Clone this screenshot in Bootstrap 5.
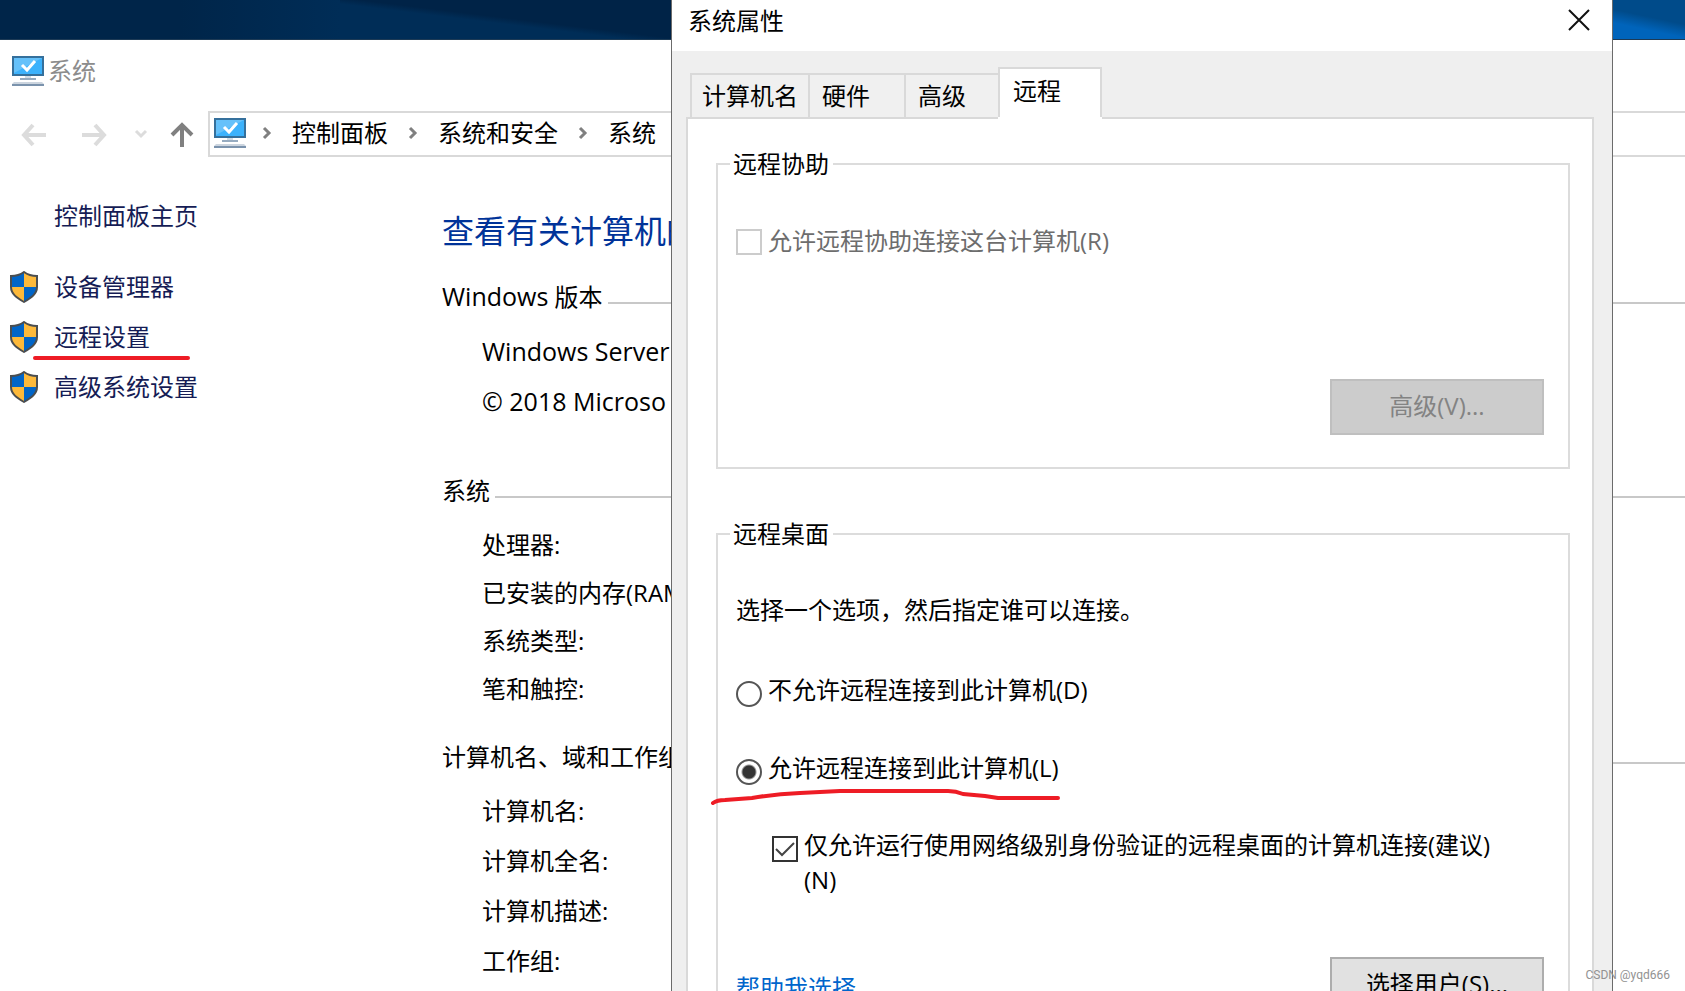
<!DOCTYPE html>
<html lang="zh-CN">
<head>
<meta charset="utf-8">
<meta name="viewport" content="width=device-width, initial-scale=1">
<title>系统属性</title>
<link href="https://cdn.jsdelivr.net/npm/bootstrap@5.3.0/dist/css/bootstrap.min.css" rel="stylesheet">
<style>
  body { font-family: "Open Sans", "Noto Sans CJK SC", sans-serif; font-size: 24px; line-height: 24px; color: #000; }
  a { text-decoration: none; }
  .desktop { padding-top: 39px; background: linear-gradient(192deg, #004b8a 0 45%, #0064bb 70%) top right / 72px 39px no-repeat, linear-gradient(187deg, #002347 0 48%, #002d57 56%) top left 340px / 332px 39px no-repeat, linear-gradient(90deg, #002549 0, #002549 180px, #002d57 340px); }
  .sys-window { border-top: 1px solid #1d3a55; background: #fff; }
  .sys-title { padding: 16px 12px 0; gap: 4px; color: #8c8c8c; }
  .nav-row { margin-top: 25px; padding-left: 20px; }
  .nav-row > button { border: 0; padding: 0; background: none; display: flex; }
  .nav-row .forward { margin-left: 32px; }
  .nav-row .up { margin-left: 19px; }
  .address { margin-left: 11px; border: 2px solid #d9d9d9; border-right: 0; height: 46px; padding: 0 4px 3px; }
  .address a { color: #000; }
  .crumbs { gap: 20px; margin-left: 16px; }
  .side { width: 442px; padding: 47px 10px 0; }
  .side a { color: #151c55; }
  .side-home { margin-left: 44px; margin-bottom: 43px; }
  .side-task { gap: 16px; height: 32px; margin-bottom: 18px; }
  .info { padding-top: 58px; }
  .info h1 { font-size: 32px; line-height: 32px; font-weight: 400; color: #003399; margin: 0 0 37px; }
  .info h2 { font-size: 24px; line-height: 24px; font-weight: 400; margin: 0 0 30px; gap: 5px; }
  .info h2::after { content: ""; flex: 1; height: 2px; margin-bottom: 5px; background: #c8c8c8; }
  .latin { font-size: 25px; }
  .facts { padding-left: 40px; margin: 0; gap: 26px; }
  .facts-tight { gap: 24px; }
  .edition { margin-bottom: 66px; }
  .hardware { margin-bottom: 44px; }
  .dialog-window { left: 671px; right: 72px; border: solid #6b6b6b; border-width: 0 1px; background: #efefef; }
  .dialog-title { height: 51px; padding: 0 22px 9px 16px; background: #fff; }
  .dialog-title button { border: 0; padding: 0; background: none; display: flex; margin-bottom: 3px; }
  .prop-tabs { padding: 18px 18px 0; height: 66px; }
  .prop-tabs button { border: 2px solid #d9d9d9; border-bottom: 0; background: #f0f0f0; height: 44px; padding: 0 10px; color: #000; text-align: left; }
  .prop-tabs button + button { border-left: 0; padding-left: 12px; width: 96px; }
  .prop-tabs button:nth-child(3) { width: 92px; border-right: 0; }
  .prop-tabs button.active { height: 50px; width: 104px; border-left: 2px solid #d9d9d9; background: #fff; padding-left: 13px; padding-bottom: 5px; }
  .sheet { margin: 0 18px 0 14px; border: 2px solid #d9d9d9; border-bottom: 0; background: #fff; padding: 33px 22px 0 28px; gap: 53px; }
  .prop-tabs button.active { position: relative; z-index: 1; box-shadow: 0 2px #fff; clip-path: inset(0 0 -2px 0); }
  .group { border: 2px solid #dcdcdc; padding: 0 24px 32px 18px; }
  .group legend { float: none; width: auto; font-size: 24px; line-height: 24px; margin: 0 0 0 -6px; padding: 0 4px 0 3px; }
  .option { display: flex; gap: 6px; }
  .option input { appearance: none; flex: none; width: 26px; height: 26px; margin: 0; border: 2px solid #333; background: #fff; }
  .option input[type=radio] { border-radius: 50%; margin-top: 3px; border-color: #555; }
  .option input[type=radio]:checked { background: radial-gradient(circle, #333 0 6px, #fff 8px); }
  .option input:disabled { border-color: #ccc; }
  .option input:disabled + label { color: #6d6d6d; opacity: 1; }
  .option .tick { background: url("data:image/svg+xml,%3Csvg xmlns='http://www.w3.org/2000/svg' viewBox='0 0 22 22'%3E%3Cpath d='M2 11l6 6L20 5' fill='none' stroke='%23444' stroke-width='2'/%3E%3C/svg%3E") center / 22px no-repeat; }
  .assist { margin-top: 53px; margin-bottom: 124px; }
  .deny { margin-top: 56px; margin-bottom: 49px; }
  .nla { margin: 51px 0 60px 36px; }
  .nla label { line-height: 35px; margin-top: -9px; }
  .hint { margin: 52px 0 0; }
  .push { width: 214px; height: 56px; border: 2px solid #adadad; background: #e1e1e1; color: #000; padding: 0 0 2px; }
  .push:disabled { border-color: #bfbfbf; background: #ccc; color: #838383; }
  .help { color: #0066cc; margin-top: 19px; }
  .pen { left: 0; top: 0; pointer-events: none; z-index: 3; }
  .watermark { right: 15px; bottom: 8px; font-size: 12px; line-height: 16px; color: #929292; z-index: 4; font-family: "Roboto", sans-serif; }
</style>
</head>
<body>
<svg class="d-none">
  <symbol id="pc" viewBox="0 0 32 30">
    <rect x="1" y="1" width="30" height="18" fill="#3cb2fc" stroke="#35709c" stroke-width="2"/>
    <path d="M2 2h28L2 17z" fill="#65c1fa"/>
    <path d="M10 9l5 5 8-9" fill="none" stroke="#fff" stroke-width="3"/>
    <path d="M8 22h16v2H8z" fill="#96abc0"/><path d="M13 20h6v2h-6z" fill="#d2dce5"/>
    <path d="M2 26h28l2 2H0z" fill="#ccd5df"/><path d="M0 28h32v2H0z" fill="#7b93ad"/>
  </symbol>
  <symbol id="shield" viewBox="0 0 28 32">
    <path d="M14 1C10 4 5 5 1 5v11c0 7 6 11 13 15 7-4 13-8 13-15V5c-4 0-9-1-13-4z" fill="#fdb93a"/>
    <path d="M14 1C10 4 5 5 1 5v11h13zM14 16h13c0 7-6 11-13 15z" fill="#0165c8"/>
    <path d="M14 1C10 4 5 5 1 5v11c0 7 6 11 13 15 7-4 13-8 13-15V5c-4 0-9-1-13-4z" fill="none" stroke="#4b4e50" stroke-width="2"/>
  </symbol>
  <symbol id="sep" viewBox="0 0 10 14"><path d="M2 2l5 5-5 5" fill="none" stroke="#808080" stroke-width="3"/></symbol>
</svg>

<div class="desktop position-relative vh-100 overflow-hidden">
  <main class="sys-window h-100">
    <div class="sys-title d-flex align-items-center">
      <svg width="32" height="30"><use href="#pc"/></svg><span>系统</span>
    </div>
    <div class="nav-row d-flex align-items-center">
      <button aria-label="后退"><svg width="28" height="26"><path d="M26 14H4M13 4L4 14l9 10" fill="none" stroke="#dcdcdc" stroke-width="4"/></svg></button>
      <button aria-label="前进" class="forward"><svg width="28" height="26"><path d="M2 14h22M15 4l9 10-9 10" fill="none" stroke="#dcdcdc" stroke-width="4"/></svg></button>
      <button aria-label="最近" class="ms-4"><svg width="18" height="14"><path d="M4 4l5 5 5-5" fill="none" stroke="#dcdcdc" stroke-width="3"/></svg></button>
      <button aria-label="向上" class="up"><svg width="28" height="28"><path d="M13 27V5M3 15L13 5l10 10" fill="none" stroke="#808080" stroke-width="4"/></svg></button>
      <nav class="address d-flex align-items-center flex-grow-1" aria-label="路径">
        <svg width="32" height="30"><use href="#pc"/></svg>
        <div class="crumbs d-flex align-items-center">
          <svg width="10" height="14"><use href="#sep"/></svg><a href="#">控制面板</a>
          <svg width="10" height="14"><use href="#sep"/></svg><a href="#">系统和安全</a>
          <svg width="10" height="14"><use href="#sep"/></svg><a href="#">系统</a>
        </div>
      </nav>
    </div>
    <div class="d-flex">
      <aside class="side flex-shrink-0">
        <div class="side-home"><a href="#">控制面板主页</a></div>
        <div class="side-task d-flex align-items-center"><svg width="28" height="32"><use href="#shield"/></svg><a href="#">设备管理器</a></div>
        <div class="side-task d-flex align-items-center"><svg width="28" height="32"><use href="#shield"/></svg><a href="#">远程设置</a></div>
        <div class="side-task d-flex align-items-center"><svg width="28" height="32"><use href="#shield"/></svg><a href="#">高级系统设置</a></div>
      </aside>
      <section class="info flex-grow-1">
        <h1>查看有关计算机的</h1>
        <h2 class="d-flex align-items-end"><span><span class="latin">Windows</span> 版本</span></h2>
        <div class="facts edition latin d-flex flex-column"><div>Windows Server</div><div>© 2018 Microso</div></div>
        <h2 class="d-flex align-items-end">系统</h2>
        <div class="facts facts-tight hardware d-flex flex-column"><div>处理器:</div><div>已安装的内存(RAM</div><div>系统类型:</div><div>笔和触控:</div></div>
        <h2 class="d-flex align-items-end">计算机名、域和工作组</h2>
        <div class="facts d-flex flex-column"><div>计算机名:</div><div>计算机全名:</div><div>计算机描述:</div><div>工作组:</div></div>
      </section>
    </div>
  </main>

  <div class="dialog-window position-absolute top-0 bottom-0 d-flex flex-column overflow-hidden" role="dialog" aria-labelledby="dlg">
    <div class="dialog-title d-flex flex-shrink-0 justify-content-between align-items-center">
      <span id="dlg">系统属性</span>
      <button aria-label="关闭"><svg width="22" height="22"><path d="M1 1l20 20M21 1L1 21" stroke="#111" stroke-width="2"/></svg></button>
    </div>
    <div class="prop-tabs d-flex flex-shrink-0 align-items-end" role="tablist">
      <button role="tab">计算机名</button><button role="tab">硬件</button><button role="tab">高级</button><button role="tab" class="active" aria-selected="true">远程</button>
    </div>
    <div class="sheet d-flex flex-column flex-grow-1 flex-shrink-0">
      <fieldset class="group">
        <legend>远程协助</legend>
        <div class="option assist"><input type="checkbox" id="ra" disabled><label for="ra">允许远程协助连接这台计算机(R)</label></div>
        <div class="d-flex justify-content-end"><button class="push" disabled>高级(V)...</button></div>
      </fieldset>
      <fieldset class="group">
        <legend>远程桌面</legend>
        <p class="hint">选择一个选项，然后指定谁可以连接。</p>
        <div class="option deny"><input type="radio" name="rd" id="no"><label for="no">不允许远程连接到此计算机(D)</label></div>
        <div class="option"><input type="radio" name="rd" id="yes" checked><label for="yes">允许远程连接到此计算机(L)</label></div>
        <div class="option nla"><input class="tick" type="checkbox" id="nla" checked><label for="nla">仅允许运行使用网络级别身份验证的远程桌面的计算机连接(建议)<br>(N)</label></div>
        <div class="d-flex justify-content-between align-items-start"><a class="help" href="#">帮助我选择</a><button class="push">选择用户(S)...</button></div>
      </fieldset>
    </div>
  </div>

  <svg class="pen position-absolute w-100 h-100" fill="none" stroke="#ee1c25" stroke-width="4" stroke-linecap="round" stroke-linejoin="round">
    <path d="M35 358H188"/>
    <path d="M713 803Q717 800 725 800L752 798Q775 794 800 793L840 791H948Q956 791 963 794L985 796 998 798H1058"/>
  </svg>
  <div class="watermark position-absolute">CSDN @yqd666</div>
</div>
<script src="https://cdn.jsdelivr.net/npm/bootstrap@5.3.0/dist/js/bootstrap.bundle.min.js"></script>
</body>
</html>
